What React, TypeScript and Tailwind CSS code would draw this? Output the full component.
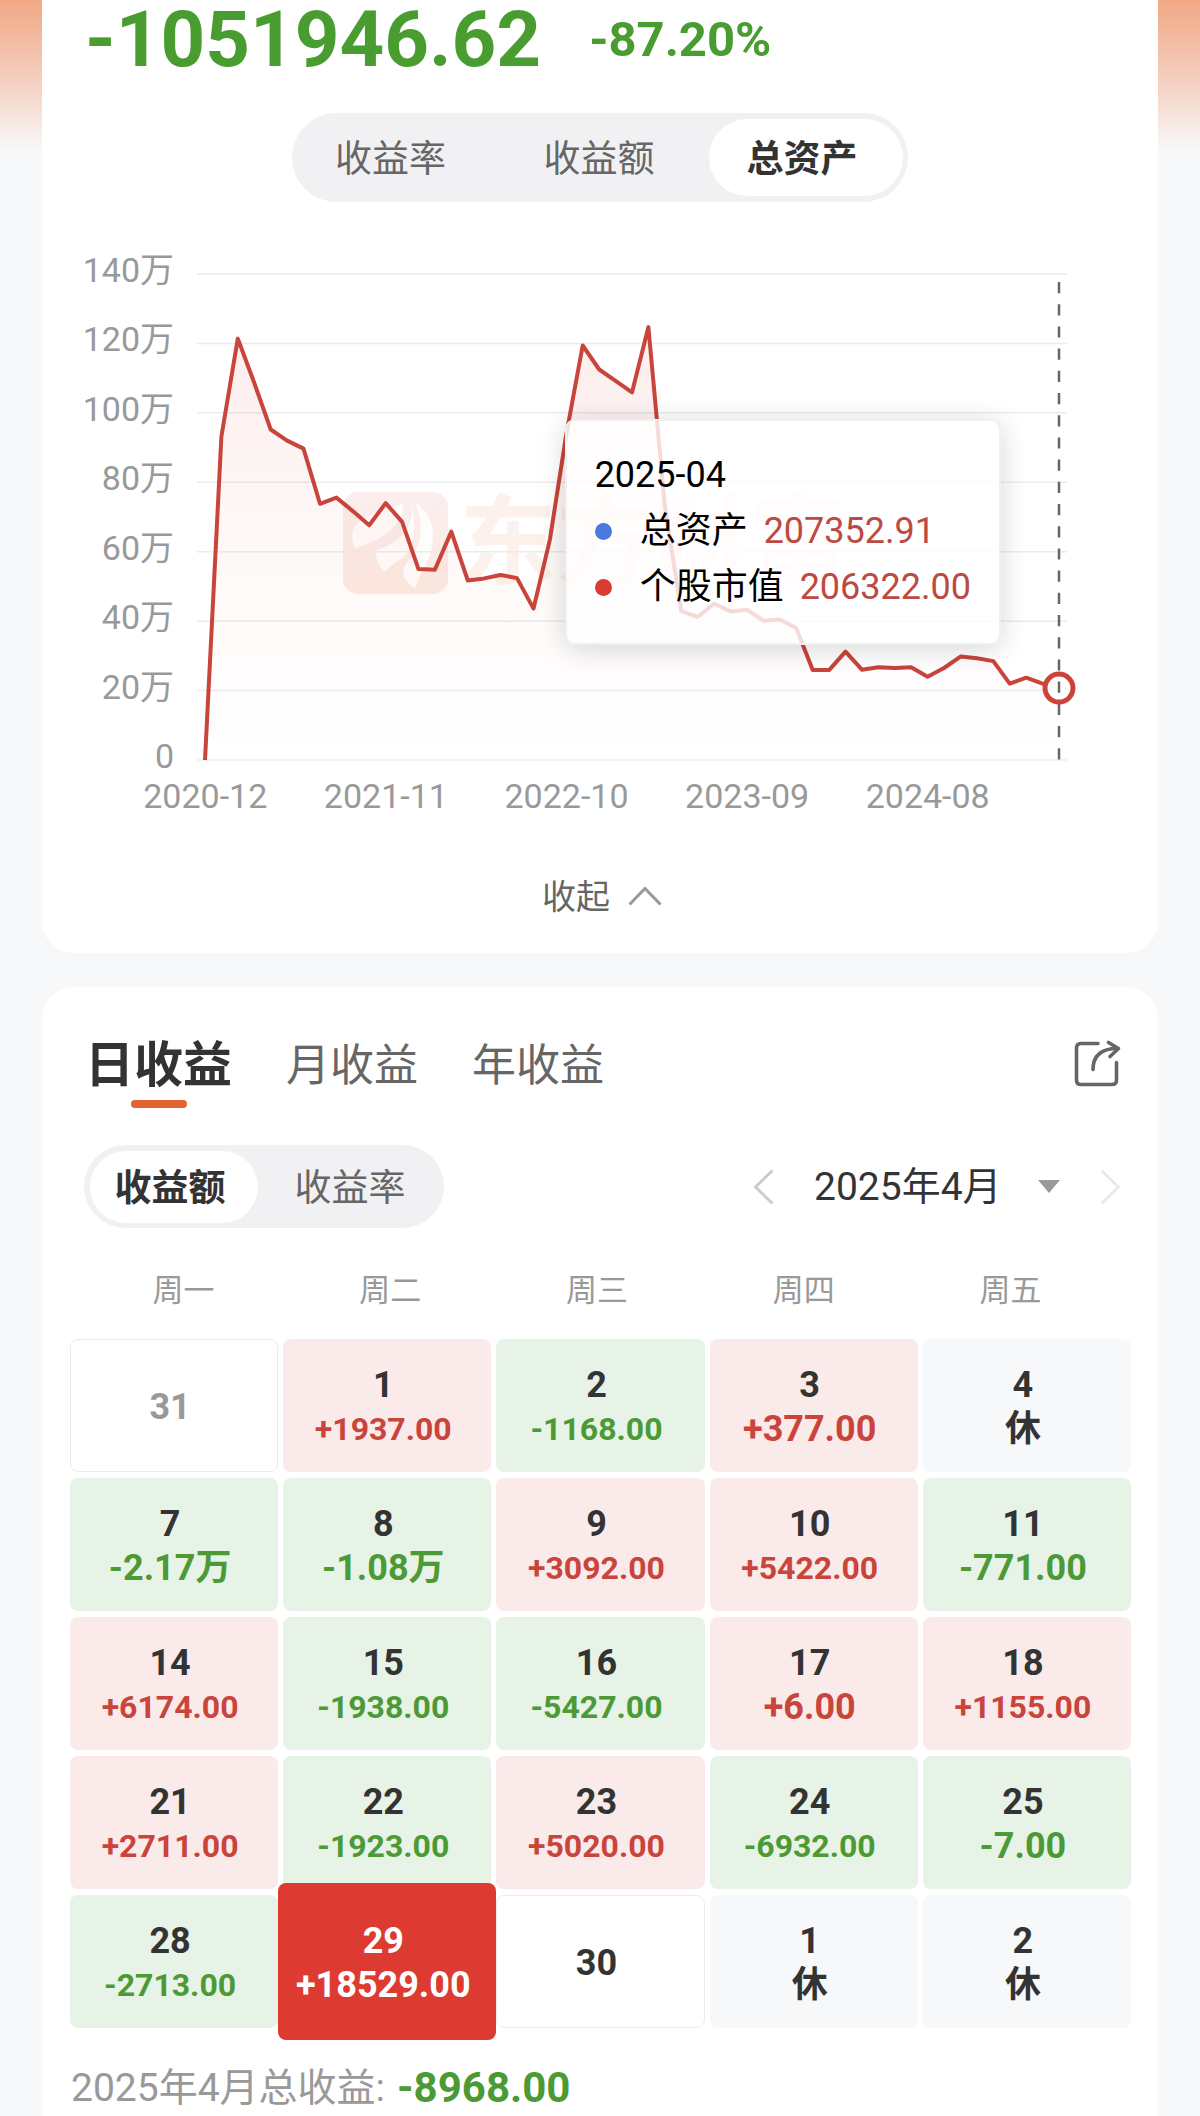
import { useState } from "react";
import clsx from "clsx";

interface Day {
  id: string;
  day: number;
  value?: string;
  kind: "up" | "down" | "rest" | "empty";
  muted?: boolean;
}

const DAYS: Day[] = [
  { id: "03-31", day: 31, kind: "empty", muted: true },
  { id: "04-01", day: 1, value: "+1937.00", kind: "up" },
  { id: "04-02", day: 2, value: "-1168.00", kind: "down" },
  { id: "04-03", day: 3, value: "+377.00", kind: "up" },
  { id: "04-04", day: 4, value: "休", kind: "rest" },
  { id: "04-07", day: 7, value: "-2.17万", kind: "down" },
  { id: "04-08", day: 8, value: "-1.08万", kind: "down" },
  { id: "04-09", day: 9, value: "+3092.00", kind: "up" },
  { id: "04-10", day: 10, value: "+5422.00", kind: "up" },
  { id: "04-11", day: 11, value: "-771.00", kind: "down" },
  { id: "04-14", day: 14, value: "+6174.00", kind: "up" },
  { id: "04-15", day: 15, value: "-1938.00", kind: "down" },
  { id: "04-16", day: 16, value: "-5427.00", kind: "down" },
  { id: "04-17", day: 17, value: "+6.00", kind: "up" },
  { id: "04-18", day: 18, value: "+1155.00", kind: "up" },
  { id: "04-21", day: 21, value: "+2711.00", kind: "up" },
  { id: "04-22", day: 22, value: "-1923.00", kind: "down" },
  { id: "04-23", day: 23, value: "+5020.00", kind: "up" },
  { id: "04-24", day: 24, value: "-6932.00", kind: "down" },
  { id: "04-25", day: 25, value: "-7.00", kind: "down" },
  { id: "04-28", day: 28, value: "-2713.00", kind: "down" },
  { id: "04-29", day: 29, value: "+18529.00", kind: "up" },
  { id: "04-30", day: 30, kind: "empty" },
  { id: "05-01", day: 1, value: "休", kind: "rest" },
  { id: "05-02", day: 2, value: "休", kind: "rest" },
];

// monthly total assets since 2020-12, in 万
const ASSETS = [
  0, 93.2, 121.4, 108.6, 95.2, 92, 89.7, 73.8, 75.6, 71.7, 67.6, 74, 68.6, 55,
  54.8, 65.8, 51.7, 52.3, 53.3, 52.4, 43.6, 63.5, 93.8, 119.4, 112.5, 109.2,
  105.9, 124.7, 73.2, 42.9, 41.2, 45, 42.8, 43.3, 40.1, 40.5, 38, 25.9, 25.9,
  31.2, 26, 26.7, 26.5, 26.7, 24, 26.5, 29.8, 29.3, 28.5, 22, 23.7, 22, 20.7,
];

const Y_LABELS = ["140万", "120万", "100万", "80万", "60万", "40万", "20万", "0"];
const X_LABELS = ["2020-12", "2021-11", "2022-10", "2023-09", "2024-08"];

const PLOT_W = 870;
const PLOT_H = 486;
const LINE_START = 8;
const LINE_END = 862;

const points = ASSETS.map((v, i) => {
  const x = LINE_START + (i * (LINE_END - LINE_START)) / (ASSETS.length - 1);
  const y = PLOT_H - (v / 140) * PLOT_H;
  return [Number(x.toFixed(1)), Number(y.toFixed(1))];
});
const linePath = "M" + points.map((p) => p.join(" ")).join("L");
const last = points[points.length - 1];

function Watermark() {
  return (
    <div
      aria-hidden="true"
      className="absolute inset-0 flex items-center justify-center gap-3 pt-[52px] pr-[74px]"
    >
      <svg viewBox="0 0 105 102" className="h-[102px] w-[105px] shrink-0">
        <defs>
          <linearGradient id="logo" x1="0" y1="0" x2="0" y2="1">
            <stop offset="0" stopColor="#fbeeed" />
            <stop offset="1" stopColor="#fbeae2" />
          </linearGradient>
        </defs>
        <rect width="105" height="102" rx="15" fill="url(#logo)" />
        <g fill="#fffdfc">
          <path d="M60 12C38 18 12 28 10 38C8 45 10 52 12 56C22 53 34 49 44 41C54 33 61 24 60 12Z" />
          <path d="M67 8C72 24 66 40 52 49C45 54 38 57 32 59C33 67 37 75 41 80C48 74 54 69 60 66C72 56 74 26 67 8Z" />
          <path d="M72 10C82 34 78 52 68 66C62 72 59 78 61 85C64 90 68 93 72 97C75 84 90 66 90 44C90 28 82 18 72 10Z" />
        </g>
      </svg>
      <span className="text-[97px] leading-none font-bold whitespace-nowrap text-[#fdf2eb]">
        东方财富
      </span>
    </div>
  );
}

function AssetChart() {
  return (
    <div>
      <div className="flex items-start">
        <div className="flex h-[526px] w-[132px] shrink-0 flex-col justify-between text-right text-[34px] leading-10 text-[#999]">
          {Y_LABELS.map((label) => (
            <span key={label}>{label}</span>
          ))}
        </div>
        <div className="relative mt-6 mr-[91px] ml-[23px] h-[486px] flex-1">
          <Watermark />
          <svg
            viewBox={`0 0 ${PLOT_W} ${PLOT_H}`}
            preserveAspectRatio="none"
            className="relative block h-full w-full overflow-visible"
          >
            <defs>
              <linearGradient
                id="area"
                gradientUnits="userSpaceOnUse"
                x1="0"
                y1="50"
                x2="0"
                y2={PLOT_H}
              >
                <stop offset="0" stopColor="#dd3b32" stopOpacity="0.09" />
                <stop offset="0.6" stopColor="#dd5b42" stopOpacity="0.03" />
                <stop offset="1" stopColor="#dd5b42" stopOpacity="0" />
              </linearGradient>
            </defs>
            {Y_LABELS.map((label, i) => (
              <line
                key={label}
                x1="0"
                x2={PLOT_W}
                y1={(i * PLOT_H) / 7}
                y2={(i * PLOT_H) / 7}
                stroke="#ebecee"
                strokeWidth="1.5"
              />
            ))}
            <path
              d={`${linePath}L${LINE_END} ${PLOT_H}L${LINE_START} ${PLOT_H}Z`}
              fill="url(#area)"
            />
            <path
              d={linePath}
              fill="none"
              stroke="#c9443b"
              strokeWidth="4"
              strokeLinejoin="round"
            />
            <circle cx={last[0]} cy={last[1]} r="14" fill="#fff" />
            <line
              x1={last[0]}
              x2={last[0]}
              y1="8"
              y2={PLOT_H}
              stroke="#666"
              strokeWidth="2.5"
              strokeDasharray="11.2 11"
            />
            <circle
              cx={last[0]}
              cy={last[1]}
              r="14"
              fill="none"
              stroke="#cd4239"
              strokeWidth="5"
            />
          </svg>
          <div className="absolute top-[145px] right-[66px] rounded-[10px] border-2 border-[#f0f0f0] bg-white/80 px-7 pt-[26px] pb-7 text-[36px] leading-[56px] whitespace-nowrap text-black shadow-[0_4px_28px_rgba(0,0,0,0.16)]">
            <p>2025-04</p>
            <p className="flex items-center">
              <span className="mr-7 size-[17px] rounded-full bg-[#4a7adf]" />
              总资产<span className="ml-4 text-[#bd4a42]">207352.91</span>
            </p>
            <p className="flex items-center">
              <span className="mr-7 size-[17px] rounded-full bg-[#dc3b32]" />
              个股市值<span className="ml-4 text-[#bd4a42]">206322.00</span>
            </p>
          </div>
        </div>
      </div>
      <div className="grid grid-cols-5 pr-[140px] pl-[73px] text-center text-[34px] leading-10 text-[#999]">
        {X_LABELS.map((label) => (
          <span key={label}>{label}</span>
        ))}
      </div>
    </div>
  );
}

function DayCell({
  item,
  selected,
  onSelect,
}: {
  item: Day;
  selected: boolean;
  onSelect: () => void;
}) {
  const { day, value, kind, muted } = item;
  const small = !selected && value && value.length > 7;

  return (
    <button
      type="button"
      onClick={onSelect}
      className={clsx(
        "flex flex-col items-center justify-center rounded-lg pt-0.5 pr-2 text-[36px] leading-[44px] font-bold",
        selected && "z-10 -mx-[5px] -my-3 bg-[#dd3b32] text-white",
        !selected && kind === "up" && "bg-[#faeaea]",
        !selected && kind === "down" && "bg-[#e7f3e6]",
        !selected && kind === "rest" && "bg-[#f7f8fa]",
        !selected && kind === "empty" && "border border-[#ececee] bg-white",
        !selected && (muted ? "text-[#999]" : "text-[#333]")
      )}
    >
      <span>{day}</span>
      {value && (
        <span
          className={clsx(
            small && "text-[32px]",
            !selected && kind === "up" && "text-[#c9443b]",
            !selected && kind === "down" && "text-[#4b9a35]"
          )}
        >
          {value}
        </span>
      )}
    </button>
  );
}

export default function App() {
  const [metric, setMetric] = useState("总资产");
  const [period, setPeriod] = useState("日收益");
  const [mode, setMode] = useState("收益额");
  const [selected, setSelected] = useState("04-29");

  return (
    <div className="bg-[#f7f8fa] bg-[linear-gradient(to_bottom,#f1a885,#f4cfbf_80px,#f7f8fa_150px)] px-[42px] font-[Roboto,'Noto_Sans_CJK_SC',sans-serif] text-[#333]">
      <section className="rounded-b-[32px] bg-white pb-9">
        <div className="flex items-center gap-12 pl-[43px] leading-[80px] font-bold text-[#489c30]">
          <span className="text-[78px]">-1051946.62</span>
          <span className="text-[49px]">-87.20%</span>
        </div>

        <div className="mx-auto mt-[33px] flex h-[89px] w-[616px] items-center justify-between rounded-full bg-[#f1f1f4] pr-[5px] text-[37px]">
          {["收益率", "收益额", "总资产"].map((name) => (
            <button
              key={name}
              type="button"
              onClick={() => setMetric(name)}
              className={clsx(
                "h-[77px] rounded-full pt-1 pr-2",
                metric === name
                  ? "w-[194px] bg-white font-bold text-[#333]"
                  : "w-[205px] text-[#666]"
              )}
            >
              {name}
            </button>
          ))}
        </div>

        <div className="mt-12">
          <AssetChart />
        </div>

        <button
          type="button"
          className="mx-auto mt-[61px] flex items-center gap-[18px] pl-1 text-[34px] leading-10 text-[#666]"
        >
          收起
          <svg viewBox="0 0 34 20" className="h-5 w-[34px]" fill="none">
            <path d="M1.5 17.5L17 1.5L32.5 17.5" stroke="#999" strokeWidth="3" />
          </svg>
        </button>
      </section>

      <section className="mt-[34px] rounded-t-[32px] bg-white pt-[51px]">
        <div className="flex items-start justify-between pr-[37px] pl-[43px]">
          <div className="flex gap-[54px]">
            {["日收益", "月收益", "年收益"].map((name) => (
              <button
                key={name}
                type="button"
                onClick={() => setPeriod(name)}
                className={clsx(
                  "flex flex-col items-center gap-1.5 leading-[56px]",
                  period === name
                    ? "text-[49px] font-bold text-[#333]"
                    : "text-[44px] text-[#666]"
                )}
              >
                {name}
                <span
                  className={clsx(
                    "h-2 w-14 rounded-full",
                    period === name && "bg-[#e26233]"
                  )}
                />
              </button>
            ))}
          </div>
          <button type="button" aria-label="分享" className="mt-0.5">
            <svg
              viewBox="0 0 48 48"
              className="size-12"
              fill="none"
              stroke="#666"
              strokeWidth="3.6"
              strokeLinecap="round"
              strokeLinejoin="round"
            >
              <path d="M25 3.500H8Q3.500 3.500 3.500 8V40Q3.500 44.500 8 44.500H39Q43.500 44.500 43.500 40V22.500" />
              <path d="M20 29.500C20 17 27 8.500 44.500 8.500" />
              <path d="M35.500 2.500L45.500 8.500L37 16.500" />
            </svg>
          </button>
        </div>

        <div className="mt-[37px] flex items-center justify-between pr-[37px] pl-[42px]">
          <div className="flex h-[83px] w-[360px] items-center rounded-full bg-[#f1f1f4] px-[6px] text-[37px]">
            {["收益额", "收益率"].map((name) => (
              <button
                key={name}
                type="button"
                onClick={() => setMode(name)}
                className={clsx(
                  "h-[72px] rounded-full pt-1",
                  mode === name
                    ? "w-[168px] bg-white pr-2 font-bold text-[#333]"
                    : "flex-1 pl-1 text-[#666]"
                )}
              >
                {name}
              </button>
            ))}
          </div>
          <div className="flex items-center gap-10">
            <button type="button" aria-label="上个月">
              <svg viewBox="0 0 21 36" className="h-9 w-[21px]" fill="none">
                <path d="M19.500 1.500L2.500 18L19.500 34.500" stroke="#ccc" strokeWidth="3" />
              </svg>
            </button>
            <label className="flex items-center gap-9">
              <select
                aria-label="月份"
                className="appearance-none bg-transparent text-[39px] leading-[56px] text-[#333]"
              >
                <option>2025年4月</option>
              </select>
              <svg viewBox="0 0 22 13" className="h-[13px] w-[22px]">
                <path d="M0 0H22L11 13Z" fill="#999" />
              </svg>
            </label>
            <button type="button" aria-label="下个月">
              <svg viewBox="0 0 21 36" className="h-9 w-[21px]" fill="none">
                <path d="M1.500 1.500L18.500 18L1.500 34.500" stroke="#e9e9e9" strokeWidth="3" />
              </svg>
            </button>
          </div>
        </div>

        <div className="mt-[43px] grid grid-cols-5 pr-[44px] pl-[38px] text-center text-[31px] leading-10 text-[#999]">
          {["周一", "周二", "周三", "周四", "周五"].map((name) => (
            <span key={name}>{name}</span>
          ))}
        </div>

        <div className="mt-7 grid auto-rows-[133px] grid-cols-5 gap-x-[5px] gap-y-[6px] pr-[27px] pl-7">
          {DAYS.map((item) => (
            <DayCell
              key={item.id}
              item={item}
              selected={selected === item.id}
              onSelect={() => setSelected(item.id)}
            />
          ))}
        </div>

        <p className="mt-8 flex items-center gap-3 pl-[29px] text-[39px] leading-[56px] text-[#999]">
          2025年4月总收益:
          <span className="text-[42px] font-bold text-[#4b9a35]">-8968.00</span>
        </p>
      </section>
    </div>
  );
}
